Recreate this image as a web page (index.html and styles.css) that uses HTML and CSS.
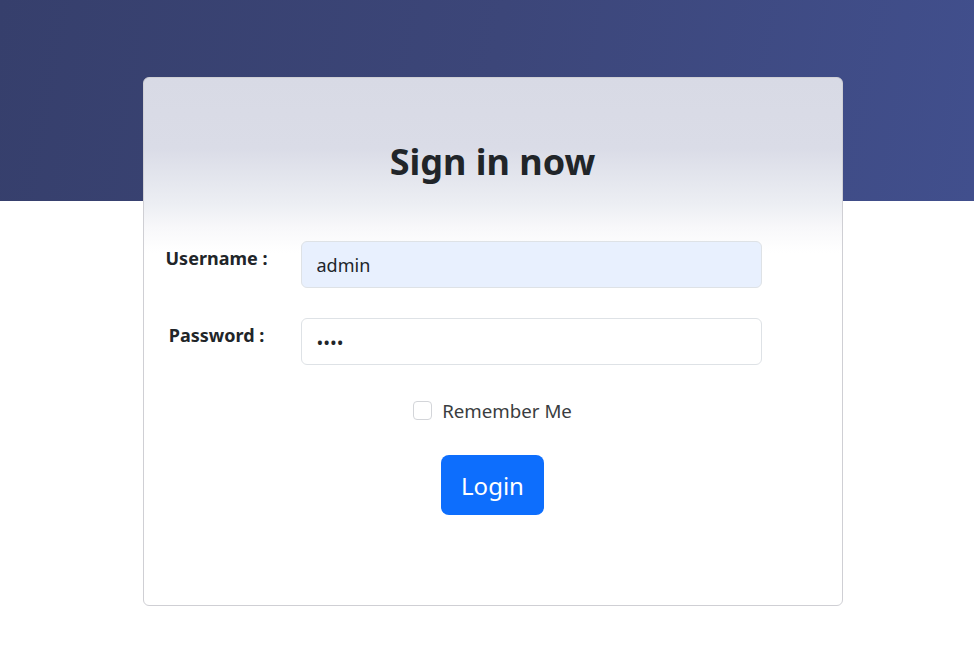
FILE: index.html
```html
<!DOCTYPE html>
<html lang="en">
<head>
<meta charset="utf-8">
<title>Sign in</title>
<link rel="stylesheet" href="styles.css">
</head>
<body>
<main class="page">
  <section class="card">
    <h1 class="title">Sign in now</h1>
    <form class="form">
      <div class="row">
        <label class="label" for="u">Username :</label>
        <input class="field field-filled" id="u" type="text" value="admin">
      </div>
      <div class="row">
        <label class="label" for="p">Password :</label>
        <input class="field" id="p" type="password" value="1234">
      </div>
      <div class="check-row">
        <span class="check"></span>
        <span class="check-text">Remember Me</span>
      </div>
      <div class="btn-row">
        <button class="btn" type="button">Login</button>
      </div>
    </form>
  </section>
</main>
</body>
</html>
```
FILE: styles.css
```css
* { box-sizing: border-box; }
html, body { margin: 0; padding: 0; }
body {
  font-family: "Noto Sans", "Open Sans", sans-serif;
  color: #212529;
  background: #fff;
  width: 974px;
  height: 655px;
  overflow: hidden;
}
.page {
  height: 655px;
  padding-top: 77px;
  padding-left: 11px;
  display: flex;
  justify-content: center;
  align-items: flex-start;
  background:
    linear-gradient(100deg, #363f6c 0%, #3c4679 50%, #414f8d 100%) top left / 100% 201px no-repeat,
    #fff;
}
.card {
  width: 700px;
  height: 529px;
  border: 1px solid #cfcfd4;
  border-radius: 6px;
  background: linear-gradient(to bottom, #d8dae5 0px, #dadce7 70px, #eceef3 125px, #f8f8fa 150px, #ffffff 175px);
  padding-top: 62px;
}
.title {
  margin: 0;
  text-align: center;
  font-size: 36px;
  font-weight: 700;
  line-height: 1.2;
  color: #212529;
}
.form {
  margin-top: 58px;
  display: flex;
  flex-direction: column;
}
.row {
  display: grid;
  grid-template-columns: 146px 461px;
  column-gap: 11px;
  align-items: start;
  margin-bottom: 30px;
}
.label {
  text-align: center;
  font-size: 18px;
  font-weight: 700;
  line-height: 24px;
  padding-top: 5px;
  color: #212529;
}
.field {
  height: 47px;
  border: 1px solid #dee2e6;
  border-radius: 6px;
  background: #fff;
  padding: 0 15px;
  font-family: inherit;
  font-size: 18px;
  color: #212529;
  outline: none;
}
.field-filled { background: #e8f0fe; }
.check-row {
  display: flex;
  justify-content: center;
  align-items: center;
  gap: 10px;
  margin-top: 0;
  height: 30px;
}
.check {
  width: 19px;
  height: 19px;
  border: 1px solid #d3d5d9;
  border-radius: 4px;
  background: #fff;
}
.check-text {
  font-size: 18.7px;
  color: #3a3d40;
}
.btn-row {
  display: flex;
  justify-content: center;
  margin-top: 30px;
}
.btn {
  width: 103px;
  height: 60px;
  border: none;
  border-radius: 8px;
  background: #0d6efd;
  color: #fff;
  font-family: inherit;
  font-size: 24px;
  padding: 0;
}
```
